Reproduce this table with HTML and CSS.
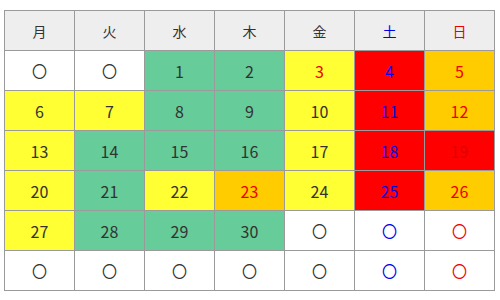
FILE: index.html
```html
<!DOCTYPE html>
<html lang="ja">
<head>
<meta charset="utf-8">
<link rel="stylesheet" href="styles.css">
</head>
<body>
<table class="cal">
  <thead>
    <tr><th>月</th><th>火</th><th>水</th><th>木</th><th>金</th><th class="sat">土</th><th class="sun">日</th></tr>
  </thead>
  <tbody>
    <tr>
      <td class="none">〇</td><td class="none">〇</td><td class="g">1</td><td class="g">2</td><td class="y rt">3</td><td class="r sat">4</td><td class="o rt">5</td>
    </tr>
    <tr>
      <td class="y">6</td><td class="y">7</td><td class="g">8</td><td class="g">9</td><td class="y">10</td><td class="r sat">11</td><td class="o rt">12</td>
    </tr>
    <tr>
      <td class="y">13</td><td class="g">14</td><td class="g">15</td><td class="g">16</td><td class="y">17</td><td class="r sat">18</td><td class="r rt">19</td>
    </tr>
    <tr>
      <td class="y">20</td><td class="g">21</td><td class="y">22</td><td class="o rt">23</td><td class="y">24</td><td class="r sat">25</td><td class="o rt">26</td>
    </tr>
    <tr>
      <td class="y">27</td><td class="g">28</td><td class="g">29</td><td class="g">30</td><td class="none">〇</td><td class="none sat">〇</td><td class="none rt">〇</td>
    </tr>
    <tr>
      <td class="none">〇</td><td class="none">〇</td><td class="none">〇</td><td class="none">〇</td><td class="none">〇</td><td class="none sat">〇</td><td class="none rt">〇</td>
    </tr>
  </tbody>
</table>
</body>
</html>
```
FILE: styles.css
```css
html, body {
  margin: 0;
  padding: 0;
  background: #fff;
}
body {
  padding: 10px 0 0 4px;
  font-family: "Noto Sans CJK JP", "DejaVu Sans", sans-serif;
}
.cal {
  border-collapse: collapse;
  table-layout: fixed;
  width: 491px;
}
.cal th, .cal td {
  border: 1px solid #9a9a9a;
  width: 69px;
  height: 39px;
  padding: 0;
  text-align: center;
  vertical-align: middle;
  font-size: 16px;
  font-weight: normal;
  color: #333;
  line-height: 1;
}
.cal th {
  background: #eeeeee;
  font-size: 14px;
}
.cal .g { background: #66cc99; }
.cal .y { background: #ffff33; }
.cal .r { background: #ff0000; }
.cal .o { background: #ffcc00; }
.cal .none { background: #fff; font-size: 15px; }
.cal .sat { color: #0000ee; }
.cal .sun, .cal .rt { color: #ee0000; }
.cal .r.rt { color: #dd0000; }
```
